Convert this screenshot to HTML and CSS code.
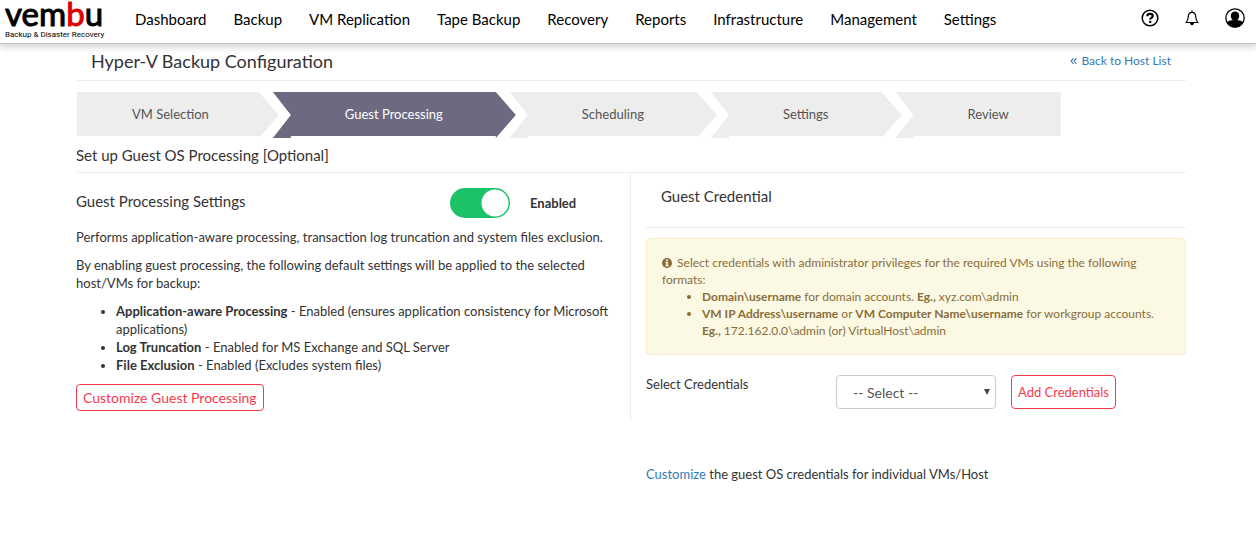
FILE: index.html
```html
<!DOCTYPE html>
<html lang="en">
<head>
<meta charset="utf-8">
<meta name="viewport" content="width=device-width, initial-scale=1">
<title>Hyper-V Backup Configuration</title>
<link rel="stylesheet" href="styles.css">
</head>
<body>
<header class="topbar">
  <a class="logo" href="#" aria-label="Vembu home">
    <svg width="104" height="42" viewBox="0 0 104 42">
      <text class="logo-name" x="0" y="25">vem<tspan class="logo-accent">b</tspan>u</text>
      <text class="logo-tag" x="0" y="36">Backup &amp; Disaster Recovery</text>
    </svg>
  </a>
  <nav class="nav">
    <a href="#">Dashboard</a>
    <a href="#">Backup</a>
    <a href="#">VM Replication</a>
    <a href="#">Tape Backup</a>
    <a href="#">Recovery</a>
    <a href="#">Reports</a>
    <a href="#">Infrastructure</a>
    <a href="#">Management</a>
    <a href="#">Settings</a>
  </nav>
  <div class="tools">
    <button class="icon-btn" type="button" aria-label="Help">
      <svg width="18" height="18" viewBox="0 0 18 18" fill="none" stroke="#000">
        <circle cx="9" cy="9" r="7.8" stroke-width="1.5"/>
        <path d="M6.200 7.200C6.300 5.600 7.400 4.900 9 4.900c1.700 0 2.700.8 2.700 2.100 0 1.800-2.500 1.900-2.500 3.600" stroke-width="2.200"/>
        <path d="M8.100 11.800h2.200V14H8.100z" fill="#000" stroke="none"/>
      </svg>
    </button>
    <button class="icon-btn" type="button" aria-label="Notifications">
      <svg width="14" height="16" viewBox="0 0 14 16" fill="none" stroke="#000">
        <path d="M7 .4v1.600M1 12.500c1.800-1.600 2.200-3.300 2.300-6C3.400 4 4.800 2.300 7 2.300S10.600 4 10.700 6.500c.1 2.700.5 4.400 2.300 6z" stroke-width="1.200" stroke-linejoin="round"/>
        <path d="M5 13h4c0 1.300-.8 2.200-2 2.200S5 14.300 5 13z" fill="#000" stroke="none"/>
      </svg>
    </button>
    <button class="icon-btn" type="button" aria-label="Account">
      <svg width="20" height="20" viewBox="0 0 20 20">
        <circle cx="10" cy="10" r="9.200" fill="#fff" stroke="#000" stroke-width="1.300"/>
        <path d="M2 14.600c.8-1.700 2.500-2.100 4.400-2.400h7.200c1.900.3 3.600.7 4.400 2.400C16.300 17.800 13.400 19.600 10 19.600s-6.300-1.800-8-5z"/>
        <path d="M10 3.600c2.600 0 4.200 1.700 4.200 4.100 0 2.700-1.700 5.300-4.200 5.300s-4.200-2.600-4.200-5.300c0-2.400 1.600-4.100 4.200-4.100z"/>
      </svg>
    </button>
  </div>
</header>

<main class="page">
  <div class="title-row">
    <h1 class="title">Hyper-V Backup Configuration</h1>
    <a class="link back" href="#">
      <svg width="7" height="8" viewBox="0 0 7 8" fill="none" stroke="currentColor" stroke-width="1.100"><path d="M3.500 1.500L1 4l2.500 3M6.500 1.500L4 4l2.500 3"/></svg>
      Back to Host List
    </a>
  </div>

  <ol class="steps">
    <li class="step">VM Selection</li>
    <li class="step step-active" aria-current="step">Guest Processing</li>
    <li class="step">Scheduling</li>
    <li class="step">Settings</li>
    <li class="step">Review</li>
  </ol>

  <h2 class="subtitle">Set up Guest OS Processing [Optional]</h2>

  <div class="columns">
    <section class="settings">
      <div class="settings-head">
        <h3 class="heading">Guest Processing Settings</h3>
        <label class="switch">
          <input class="switch-input" type="checkbox" role="switch" checked>
          <span class="switch-text">Enabled</span>
        </label>
      </div>
      <p class="text">Performs application-aware processing, transaction log truncation and system files exclusion.</p>
      <p class="text">By enabling guest processing, the following default settings will be applied to the selected host/VMs for backup:</p>
      <ul class="list">
        <li><b>Application-aware Processing</b> - Enabled (ensures application consistency for Microsoft applications)</li>
        <li><b>Log Truncation</b> - Enabled for MS Exchange and SQL Server</li>
        <li><b>File Exclusion</b> - Enabled (Excludes system files)</li>
      </ul>
      <button class="btn btn-large-text" type="button">Customize Guest Processing</button>
    </section>

    <section class="credential">
      <h3 class="heading credential-head">Guest Credential</h3>
      <div class="notice">
        <p class="notice-text">
          <svg class="info" width="10" height="10" viewBox="0 0 10 10"><circle cx="5" cy="5" r="5" fill="#8a6d3b"/><path d="M4.100 1.400h1.800v1.500H4.100zM3.400 3.800h2.500v3.300h.8v1.200H3.400V7.100h.8V5h-.8z" fill="#fbf9e3"/></svg>
          Select credentials with administrator privileges for the required VMs using the following formats:
        </p>
        <ul class="notice-list">
          <li><b>Domain\username</b> for domain accounts. <b>Eg.,</b> xyz.com\admin</li>
          <li><b>VM IP Address\username</b> or <b>VM Computer Name\username</b> for workgroup accounts. <b>Eg.,</b> 172.162.0.0\admin (or) VirtualHost\admin</li>
        </ul>
      </div>
      <div class="field">
        <label class="field-label" for="credentials">Select Credentials</label>
        <div class="select-wrap">
          <select class="select" id="credentials"><option>-- Select --</option></select>
          <svg class="caret" width="6" height="6" viewBox="0 0 6 6"><path d="M0 0h6L3 6z" fill="#444"/></svg>
        </div>
        <button class="btn btn-tall" type="button">Add Credentials</button>
      </div>
      <p class="footnote"><a class="link" href="#">Customize</a> the guest OS credentials for individual VMs/Host</p>
    </section>
  </div>
</main>
</body>
</html>
```

FILE: styles.css
```css
* { box-sizing: border-box; }

body {
  margin: 0;
  background: #fff;
  color: #333;
  font: 13px/18px Lato, "Liberation Sans", sans-serif;
}

h1, h2, h3, p, ul, ol { margin: 0; padding: 0; font-weight: 400; }
button, select { font-family: inherit; }

.topbar {
  display: flex;
  align-items: center;
  height: 44px;
  padding: 0 11px 0 5px;
  border-bottom: 1px solid #c3c7c3;
  box-shadow: 0 2px 8px rgba(0, 0, 0, .22);
}

.logo { display: flex; flex: none; width: 130px; }
.logo-name {
  fill: #000;
  stroke: #000;
  stroke-width: 1px;
  stroke-linejoin: round;
  font-size: 33px;
}
.logo-accent { fill: #e00000; stroke: #e00000; }
.logo-tag { font-family: Roboto, sans-serif; font-size: 8px; }

.nav { display: flex; flex: 1; gap: 27px; padding-bottom: 6px; }
.nav a {
  color: #000;
  font-size: 15px;
  line-height: 20px;
  text-decoration: none;
  white-space: nowrap;
}

.tools { display: flex; align-items: center; gap: 26px; padding-bottom: 7px; }
.icon-btn { display: flex; padding: 0; border: 0; background: none; }

.page { padding: 0 70px 0 76px; }

.title-row {
  display: flex;
  align-items: center;
  justify-content: space-between;
  height: 37px;
  padding: 0 15px 2px;
  border-bottom: 1px solid #eee;
}
.title { font-size: 18px; line-height: 24px; }
.link { color: #337ab7; text-decoration: none; }
.back { display: flex; align-items: center; gap: 4px; font-size: 12px; }

.steps { display: flex; padding: 11px 0 0 1px; list-style: none; }
.step {
  height: 46px;
  padding: 0 73px 0 72px;
  background: #ededed;
  color: #555;
  line-height: 44px;
  white-space: nowrap;
  clip-path: polygon(0 0, calc(100% - 20px) 0, 100% 23px, calc(100% - 20px) 46px, calc(100% - 20px) 44px, 18px 44px, 18px 46px, 0 46px, 18px 23px);
}
.step + .step { margin-left: -6px; }
.step-active { background: #6c6981; color: #fff; }
.step:first-child {
  padding: 0 70px 0 55px;
  clip-path: polygon(0 0, calc(100% - 20px) 0, 100% 23px, calc(100% - 20px) 46px, calc(100% - 20px) 44px, 0 44px);
}
.step:last-child {
  padding-right: 52px;
  clip-path: polygon(0 0, 100% 0, 100% 44px, 18px 44px, 18px 46px, 0 46px, 18px 23px);
}

.subtitle {
  padding: 7px 0;
  border-bottom: 1px solid #eee;
  font-size: 15px;
  line-height: 20px;
}

.columns { display: grid; grid-template-columns: 1fr 1fr; align-items: start; }

.settings { padding: 15px 15px 10px 0; border-right: 1px solid #eee; }
.settings-head { display: flex; margin-bottom: 10px; }
.heading { font-size: 15px; line-height: 20px; }
.settings-head .heading { width: 374px; padding-top: 3px; }
.switch { display: flex; align-items: center; gap: 20px; }
.switch-input {
  appearance: none;
  width: 60px;
  height: 30px;
  margin: 0;
  border-radius: 15px;
  background: radial-gradient(circle at 45px 15px, #fff 13px, #1bc268 14px);
}
.switch-text { font-weight: 700; }
.text { margin-bottom: 10px; }
.list { margin-bottom: 10px; padding-left: 40px; }

.btn {
  padding: 0 6px;
  border: 1px solid #f83b4c;
  border-radius: 4px;
  background: #fff;
  color: #f83b4c;
  font-size: 13px;
  white-space: nowrap;
}
.btn-large-text { height: 27px; font-size: 14px; }
.btn-tall { height: 34px; }

.credential { padding-left: 15px; }
.credential-head { padding: 13px 15px 21px; border-bottom: 1px solid #eee; }
.notice {
  margin: 10px 0 20px;
  padding: 15px;
  border: 1px solid #faebcc;
  border-radius: 4px;
  background: #fbf9e3;
  color: #8a6d3b;
  font-size: 12px;
  line-height: 17px;
}
.info { margin-right: 2px; vertical-align: -1px; }
.notice-list { padding-left: 40px; }

.field { display: flex; gap: 15px; }
.field-label { width: 175px; }
.select-wrap { position: relative; width: 160px; }
.select {
  appearance: none;
  width: 100%;
  height: 34px;
  padding: 0 16px;
  border: 1px solid #ccc;
  border-radius: 4px;
  background: #fff;
  color: #555;
  font-size: 14px;
}
.caret { position: absolute; top: 14px; right: 6px; pointer-events: none; }
.footnote { margin-top: 56px; }
```
